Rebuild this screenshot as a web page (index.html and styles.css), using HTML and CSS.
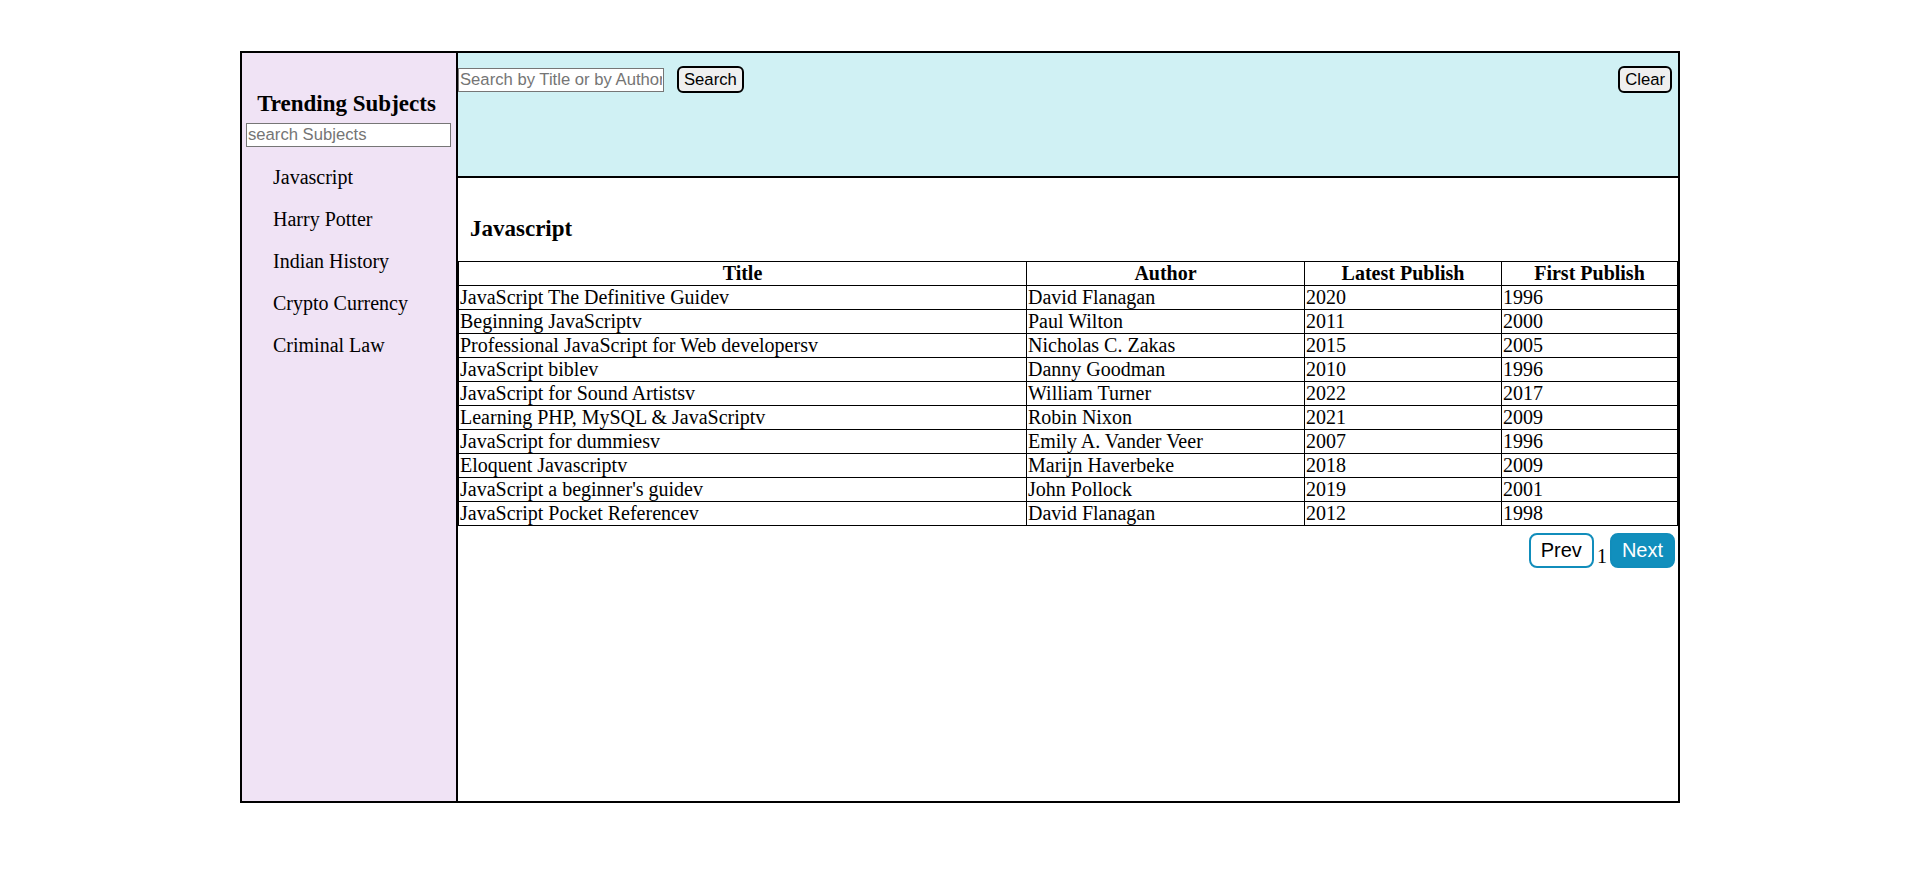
FILE: index.html
```html
<!DOCTYPE html>
<html>
<head>
<meta charset="utf-8">
<title>Books</title>
<link rel="stylesheet" href="styles.css">
</head>
<body>
<div class="app">
  <aside class="sidebar">
    <h3 class="side-title">Trending Subjects</h3>
    <input class="side-search" type="text" placeholder="search Subjects">
    <ul class="subjects">
      <li>Javascript</li>
      <li>Harry Potter</li>
      <li>Indian History</li>
      <li>Crypto Currency</li>
      <li>Criminal Law</li>
    </ul>
  </aside>
  <main class="main">
    <header class="topbar">
      <input class="top-search" type="text" placeholder="Search by Title or by Author">
      <button class="btn search-btn">Search</button>
      <button class="btn clear-btn">Clear</button>
    </header>
    <section class="content">
      <h3 class="subject-title">Javascript</h3>
      <table class="books">
        <colgroup>
          <col class="c-title">
          <col class="c-author">
          <col class="c-latest">
          <col>
        </colgroup>
        <thead>
          <tr><th>Title</th><th>Author</th><th>Latest Publish</th><th>First Publish</th></tr>
        </thead>
        <tbody>
          <tr><td>JavaScript The Definitive Guidev</td><td>David Flanagan</td><td>2020</td><td>1996</td></tr>
          <tr><td>Beginning JavaScriptv</td><td>Paul Wilton</td><td>2011</td><td>2000</td></tr>
          <tr><td>Professional JavaScript for Web developersv</td><td>Nicholas C. Zakas</td><td>2015</td><td>2005</td></tr>
          <tr><td>JavaScript biblev</td><td>Danny Goodman</td><td>2010</td><td>1996</td></tr>
          <tr><td>JavaScript for Sound Artistsv</td><td>William Turner</td><td>2022</td><td>2017</td></tr>
          <tr><td>Learning PHP, MySQL &amp; JavaScriptv</td><td>Robin Nixon</td><td>2021</td><td>2009</td></tr>
          <tr><td>JavaScript for dummiesv</td><td>Emily A. Vander Veer</td><td>2007</td><td>1996</td></tr>
          <tr><td>Eloquent Javascriptv</td><td>Marijn Haverbeke</td><td>2018</td><td>2009</td></tr>
          <tr><td>JavaScript a beginner's guidev</td><td>John Pollock</td><td>2019</td><td>2001</td></tr>
          <tr><td>JavaScript Pocket Referencev</td><td>David Flanagan</td><td>2012</td><td>1998</td></tr>
        </tbody>
      </table>
      <div class="pager">
        <button class="page-btn prev">Prev</button>
        <span class="page-num">1</span>
        <button class="page-btn next">Next</button>
      </div>
    </section>
  </main>
</div>
</body>
</html>
```
FILE: styles.css
```css
html, body {
  margin: 0;
  padding: 0;
  background: #ffffff;
}
body {
  font-family: "Liberation Serif", "Times New Roman", serif;
  font-size: 20px;
  color: #000;
}
.app {
  box-sizing: border-box;
  display: flex;
  width: 1440px;
  height: 752px;
  margin: 51px 0 0 240px;
  border: 2px solid #000;
}
.sidebar {
  box-sizing: border-box;
  width: 216px;
  flex: none;
  background: #f0e3f5;
  border-right: 2px solid #000;
  padding-top: 37px;
}
.side-title {
  margin: 0;
  padding-right: 5px;
  font-size: 23px;
  line-height: 27px;
  font-weight: bold;
  text-align: center;
}
.side-search {
  display: block;
  box-sizing: border-box;
  width: 205px;
  height: 24px;
  margin: 6px 0 0 4px;
  padding: 1px 1px;
  border: 1px solid #767676;
  font-family: "Liberation Sans", Arial, sans-serif;
  font-size: 16.67px;
  background: #fff;
}
.side-search::placeholder,
.top-search::placeholder {
  color: #757575;
}
.subjects {
  list-style: none;
  margin: 9.7px 0 0;
  padding: 0 0 0 31px;
}
.subjects li {
  font-size: 20px;
  line-height: 23px;
  padding: 9.45px 0;
}
.main {
  flex: 1;
  display: flex;
  flex-direction: column;
  min-width: 0;
}
.topbar {
  box-sizing: border-box;
  height: 125px;
  flex: none;
  background: #d0f1f4;
  border-bottom: 2px solid #000;
  display: flex;
  align-items: center;
  align-content: flex-start;
  flex-wrap: wrap;
  padding-top: 13px;
}
.top-search {
  box-sizing: border-box;
  width: 206px;
  height: 24px;
  margin: 0;
  padding: 1px 1px;
  border: 1px solid #767676;
  font-family: "Liberation Sans", Arial, sans-serif;
  font-size: 16.67px;
  background: #fff;
}
.btn {
  box-sizing: border-box;
  height: 27px;
  padding: 0 5px;
  border: 2px solid #000;
  border-radius: 6px;
  background: #efefef;
  font-family: "Liberation Sans", Arial, sans-serif;
  font-size: 16.67px;
  color: #000;
}
.search-btn {
  margin-left: 13px;
}
.clear-btn {
  margin-left: auto;
  margin-right: 6px;
}
.content {
  flex: 1;
}
.subject-title {
  margin: 36.6px 0 19.4px;
  padding-left: 12px;
  font-size: 23px;
  line-height: 27px;
  font-weight: bold;
}
.books {
  width: 100%;
  table-layout: fixed;
  border-collapse: collapse;
  font-size: 20px;
}
.books th,
.books td {
  border: 1px solid #000;
  padding: 0 1px;
  line-height: 23px;
  white-space: nowrap;
  overflow: hidden;
}
.books th {
  font-weight: bold;
  text-align: center;
}
.books td {
  text-align: left;
}
.c-title {
  width: 568px;
}
.c-author {
  width: 278px;
}
.c-latest {
  width: 197px;
}
.pager {
  display: flex;
  justify-content: flex-end;
  align-items: flex-end;
  margin-top: 7px;
  padding-right: 3px;
}
.page-btn {
  box-sizing: border-box;
  height: 35px;
  padding: 0 10px;
  border: 2px solid #118dbb;
  border-radius: 8px;
  font-family: "Liberation Sans", Arial, sans-serif;
  font-size: 20px;
}
.prev {
  background: #fff;
  color: #000;
}
.next {
  background: #118fbd;
  color: #fff;
}
.page-num {
  font-size: 20px;
  line-height: 23px;
  margin: 0 3px 0 3px;
}
```
